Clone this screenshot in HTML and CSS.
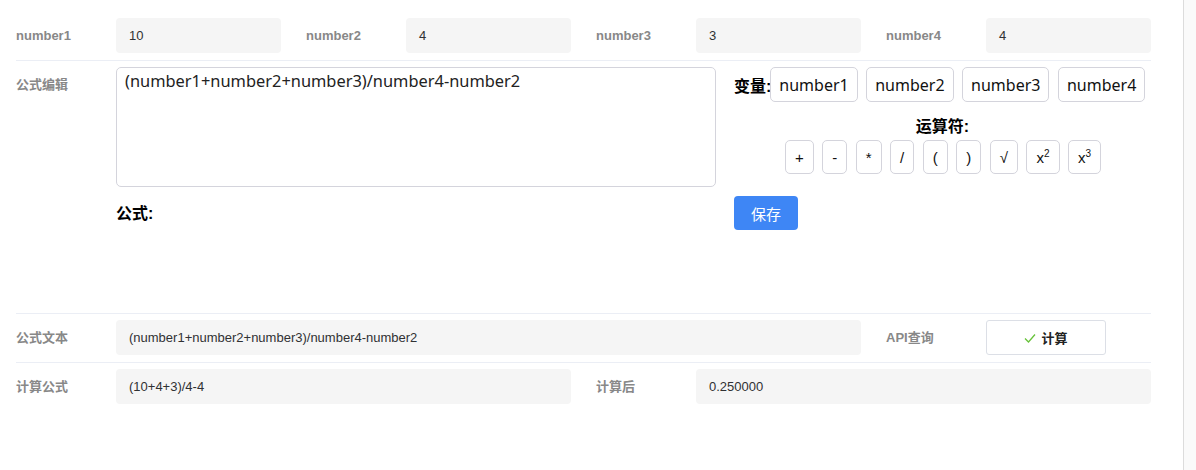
FILE: index.html
```html
<!DOCTYPE html>
<html lang="zh-CN">
  <head>
    <meta charset="UTF-8" />
    <meta name="viewport" content="width=device-width, initial-scale=1.0" />
    <title>公式编辑</title>
    <link rel="stylesheet" href="styles.css">
  </head>
  <body>
    <main class="page">
      <!-- 变量值 -->
      <div class="row">
        <div class="field">
          <span class="label">number1</span>
          <div class="value">10</div>
        </div>
        <div class="field">
          <span class="label">number2</span>
          <div class="value">4</div>
        </div>
        <div class="field">
          <span class="label">number3</span>
          <div class="value">3</div>
        </div>
        <div class="field">
          <span class="label">number4</span>
          <div class="value">4</div>
        </div>
      </div>

      <!-- 公式编辑 -->
      <div class="row editor-row">
        <span class="label">公式编辑</span>
        <div class="editor-left">
          <textarea class="formula-input">(number1+number2+number3)/number4-number2</textarea>
          <p class="formula-title">公式:</p>
        </div>
        <div class="editor-right">
          <div class="vars">
            <span class="title">变量:</span>
            <button type="button" class="btn var-btn">number1</button>
            <button type="button" class="btn var-btn">number2</button>
            <button type="button" class="btn var-btn">number3</button>
            <button type="button" class="btn var-btn">number4</button>
          </div>
          <div class="ops-title title">运算符:</div>
          <div class="ops">
            <button type="button" class="btn op-btn">+</button>
            <button type="button" class="btn op-btn">-</button>
            <button type="button" class="btn op-btn">*</button>
            <button type="button" class="btn op-btn">/</button>
            <button type="button" class="btn op-btn">(</button>
            <button type="button" class="btn op-btn">)</button>
            <button type="button" class="btn op-btn">√</button>
            <button type="button" class="btn op-btn">x<sup>2</sup></button>
            <button type="button" class="btn op-btn">x<sup>3</sup></button>
          </div>
          <button type="button" class="save-btn">保存</button>
        </div>
      </div>

      <!-- 公式文本 -->
      <div class="row">
        <div class="field">
          <span class="label">公式文本</span>
          <div class="value">(number1+number2+number3)/number4-number2</div>
        </div>
        <div class="field field-fixed">
          <span class="label">API查询</span>
          <button type="button" class="calc-btn">
            <svg width="12" height="12" viewBox="0 0 12 12">
              <polyline points="1,6.5 4.5,10 11,2.5" fill="none" stroke="#67c23a" stroke-width="1.3" />
            </svg>
            计算
          </button>
        </div>
      </div>

      <!-- 计算结果 -->
      <div class="row last-row">
        <div class="field">
          <span class="label">计算公式</span>
          <div class="value">(10+4+3)/4-4</div>
        </div>
        <div class="field">
          <span class="label">计算后</span>
          <div class="value">0.250000</div>
        </div>
      </div>
    </main>
    <div class="scroll-track"></div>
  </body>
</html>
```

FILE: styles.css
```css
body {
  display: flex;
  margin: 0;
  height: 470px;
  overflow: hidden;
  font-family: "Liberation Sans", "Noto Sans CJK SC", sans-serif;
  color: #303133;
  background-color: #fff;
}

.page {
  flex: 1;
  padding: 18px 32px 0 16px;
}

.scroll-track {
  width: 12px;
  border-left: 1px solid #dcdcdc;
  background-color: #fafafa;
}

.row {
  display: flex;
  gap: 25px;
  padding: 0 0 7px;
  border-bottom: 1px solid #ebeef5;
}

.row + .row {
  padding-top: 6px;
}

.last-row {
  border-bottom: none;
}

.field {
  display: flex;
  flex: 1;
  min-width: 0;
}

.field-fixed {
  flex: 0 0 265px;
}

.label {
  flex: 0 0 100px;
  font-size: 13px;
  font-weight: bold;
  line-height: 35px;
  color: #888;
}

.value {
  flex: 1;
  height: 35px;
  line-height: 35px;
  padding: 0 13px;
  font-size: 13px;
  color: #303133;
  background-color: #f5f5f5;
  border-radius: 4px;
  white-space: nowrap;
  overflow: hidden;
}

.editor-row {
  gap: 0;
  min-height: 239px;
}

.editor-left {
  flex: 0 0 600px;
  margin-right: 18px;
}

.formula-input {
  display: block;
  box-sizing: border-box;
  width: 600px;
  height: 120px;
  padding: 2px 8px;
  font-family: "Noto Sans", "Noto Sans CJK SC", sans-serif;
  font-size: 16.4px;
  line-height: 22px;
  color: #222;
  border: 1px solid #d4d4dc;
  border-radius: 5px;
  resize: none;
  outline: none;
}

.formula-title {
  margin: 17px 0 0;
  font-size: 16px;
  font-weight: bold;
  line-height: 20px;
  color: #000;
}

.editor-right {
  flex: 1;
  min-width: 0;
}

.title {
  font-size: 16px;
  font-weight: bold;
  color: #000;
  white-space: nowrap;
}

.vars {
  display: flex;
  align-items: center;
  gap: 8.5px;
}

.vars .title {
  flex-shrink: 0;
  margin-right: -9.5px;
}

.btn {
  flex-shrink: 0;
  height: 35px;
  padding: 0 8px;
  font-family: "Noto Sans", "Noto Sans CJK SC", sans-serif;
  font-size: 16px;
  color: #111;
  background-color: #fff;
  border: 1px solid #d4d4dc;
  border-radius: 5px;
  cursor: pointer;
}

.ops-title {
  margin-top: 15px;
  line-height: 20px;
  text-align: center;
}

.ops {
  display: flex;
  justify-content: center;
  gap: 8.5px;
  margin-top: 3px;
  padding-left: 1px;
}

.op-btn {
  height: 34px;
  padding: 0 9px;
  font-family: "Liberation Sans", sans-serif;
  font-size: 15px;
  line-height: 1;
}

.op-btn sup {
  font-size: 10px;
  vertical-align: 6px;
}

.save-btn {
  display: block;
  margin-top: 22px;
  width: 64px;
  height: 34px;
  font-family: "Noto Sans CJK SC", sans-serif;
  font-size: 15px;
  color: #fff;
  background-color: #3e86f5;
  border: none;
  border-radius: 4px;
  cursor: pointer;
}

.calc-btn {
  display: flex;
  align-items: center;
  justify-content: center;
  gap: 5px;
  width: 120px;
  height: 35px;
  font-family: "Noto Sans CJK SC", sans-serif;
  font-size: 13px;
  font-weight: bold;
  color: #222;
  background-color: #fff;
  border: 1px solid #dcdfe6;
  border-radius: 3px;
  cursor: pointer;
}
```
